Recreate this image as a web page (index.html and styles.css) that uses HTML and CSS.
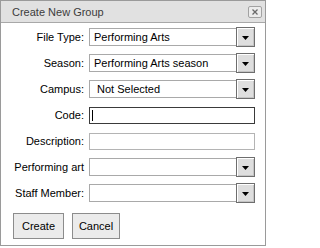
FILE: index.html
```html
<!DOCTYPE html>
<html>
<head>
<meta charset="utf-8">
<link rel="stylesheet" href="styles.css">
</head>
<body>
<div class="dialog">
  <div class="titlebar">
    <span class="title">Create New Group</span>
    <span class="close"><svg width="12" height="10" viewBox="0 0 12 10"><path d="M3.5 2.5 L8.5 7.5 M8.5 2.5 L3.5 7.5" stroke="#6a6a6a" stroke-width="1.3" fill="none"/></svg></span>
  </div>
  <div class="form">
    <label class="lbl">File Type:</label>
    <div class="select"><span class="select-value">Performing Arts</span><span class="select-btn"><svg width="7" height="4" viewBox="0 0 7 4"><polygon points="0,0 7,0 3.5,4" fill="#000"/></svg></span></div>

    <label class="lbl">Season:</label>
    <div class="select"><span class="select-value">Performing Arts season</span><span class="select-btn"><svg width="7" height="4" viewBox="0 0 7 4"><polygon points="0,0 7,0 3.5,4" fill="#000"/></svg></span></div>

    <label class="lbl">Campus:</label>
    <div class="select"><span class="select-value">&nbsp;Not Selected</span><span class="select-btn"><svg width="7" height="4" viewBox="0 0 7 4"><polygon points="0,0 7,0 3.5,4" fill="#000"/></svg></span></div>

    <label class="lbl">Code:</label>
    <div class="input focused"><span class="caret"></span></div>

    <label class="lbl">Description:</label>
    <div class="input"></div>

    <label class="lbl">Performing art</label>
    <div class="select"><span class="select-value"></span><span class="select-btn"><svg width="7" height="4" viewBox="0 0 7 4"><polygon points="0,0 7,0 3.5,4" fill="#000"/></svg></span></div>

    <label class="lbl">Staff Member:</label>
    <div class="select"><span class="select-value"></span><span class="select-btn"><svg width="7" height="4" viewBox="0 0 7 4"><polygon points="0,0 7,0 3.5,4" fill="#000"/></svg></span></div>
  </div>
  <div class="actions">
    <button class="btn btn-create">Create</button>
    <button class="btn btn-cancel">Cancel</button>
  </div>
</div>
</body>
</html>
```

FILE: styles.css
```css
html, body {
  margin: 0;
  padding: 0;
  background: #ffffff;
}

body {
  font-family: "Liberation Sans", Arial, sans-serif;
  font-size: 11px;
  color: #000;
}

.dialog {
  box-sizing: border-box;
  width: 266px;
  height: 246px;
  border: 1px solid #9a9a9a;
  background: #fff;
}

.titlebar {
  height: 21px;
  border-bottom: 1px solid #a8a8a8;
  background: #e1e1e1;
  display: flex;
  align-items: center;
  justify-content: space-between;
  padding-left: 11px;
}

.title {
  color: #3c3c3c;
  font-size: 11px;
  line-height: 13px;
  margin-top: 1px;
}

.close {
  box-sizing: border-box;
  width: 14px;
  height: 12px;
  margin-right: 3px;
  margin-top: 1px;
  border: 1px solid #a2a2a2;
  border-radius: 2px;
  background: #ececec;
  display: flex;
  align-items: center;
  justify-content: center;
}

.close svg {
  display: block;
}

.form {
  display: grid;
  grid-template-columns: 83px 166px;
  grid-auto-rows: 18px;
  column-gap: 5px;
  row-gap: 8px;
  padding-top: 5px;
  align-items: center;
}

.lbl {
  text-align: right;
  line-height: 13px;
  white-space: nowrap;
}

.select {
  box-sizing: border-box;
  height: 18px;
  border: 1px solid #a9a9a9;
  display: flex;
  align-items: center;
}

.select-value {
  flex: 1;
  padding-left: 4px;
  line-height: 16px;
  white-space: nowrap;
  overflow: hidden;
}

.select-btn {
  box-sizing: border-box;
  width: 19px;
  height: 20px;
  margin: -1px -1px -1px 0;
  border: 1px solid #6e6e6e;
  box-shadow: inset 1px 1px 0 #ffffff, inset -1px -1px 0 #c4c4c4;
  background: #dedede;
  display: flex;
  align-items: center;
  justify-content: center;
}

.select-btn svg {
  display: block;
  margin-top: 1px;
}

.input {
  box-sizing: border-box;
  height: 17px;
  border: 1px solid #b4b4b4;
  display: flex;
  align-items: center;
}

.input.focused {
  border: 1px solid #3a3a3a;
}

.caret {
  width: 1px;
  height: 11px;
  margin-left: 2px;
  background: #000;
}

.actions {
  display: flex;
  gap: 8px;
  padding-left: 12px;
  margin-top: 11px;
}

.btn {
  box-sizing: border-box;
  height: 26px;
  border: 1px solid #8c8c8c;
  border-radius: 0;
  background: #ebebeb;
  font-family: "Liberation Sans", Arial, sans-serif;
  font-size: 11px;
  color: #000;
  padding: 0;
  margin: 0;
}

.btn-create {
  width: 51px;
}

.btn-cancel {
  width: 48px;
}
```
